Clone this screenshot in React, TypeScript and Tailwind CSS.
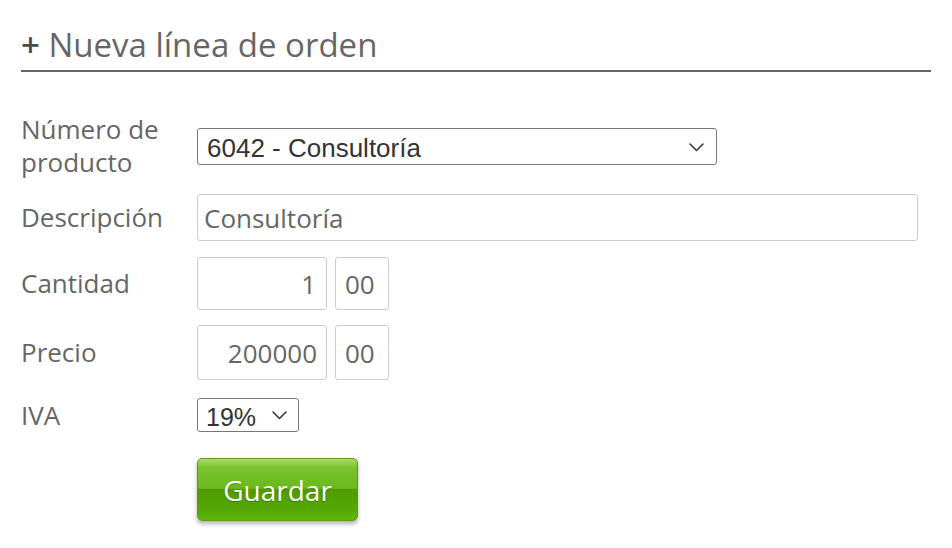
import React from 'react';

const labelCls = 'w-[176px] shrink-0 text-[26px] leading-[33px] text-[#666]';
const inputCls =
  'rounded-[3px] border border-[#ccc] bg-white px-[6px] text-[26px] text-[#666] outline-none font-["Open_Sans",sans-serif]';

function Chevron({ className }: { className?: string }) {
  return (
    <svg
      className={className}
      width="15"
      height="9"
      viewBox="0 0 15 9"
      fill="none"
      stroke="#333"
      strokeWidth="1.5"
      strokeLinecap="round"
      strokeLinejoin="round"
    >
      <path d="M1 1l6.5 6.5L14 1" />
    </svg>
  );
}

export default function App() {
  return (
    <div className="min-h-[548px] w-[952px] bg-white px-[21px] pt-[26px] font-['Open_Sans',sans-serif]">
      {/* Title */}
      <h2 className="border-b-2 border-[#666] pb-[6px] text-[33px] leading-[38px] text-[#666]">
        <span className="font-semibold leading-none text-[#4a4a4a]">+</span> Nueva línea de orden
      </h2>

      <form className="mt-[41px] flex flex-col" onSubmit={(e) => e.preventDefault()}>
        {/* Product */}
        <div className="flex items-center">
          <label className={labelCls}>
            Número de
            <br />
            producto
          </label>
          <div className="relative">
            <select
              defaultValue="6042"
              className="h-[37px] w-[520px] appearance-none rounded-[3px] border border-[#767676] bg-white pl-[9px] text-[26px] text-[#333] outline-none font-['Liberation_Sans',Arial,sans-serif]"
            >
              <option value="6042">6042 - Consultoría</option>
            </select>
            <Chevron className="pointer-events-none absolute right-[13px] top-[15px]" />
          </div>
        </div>

        {/* Description */}
        <div className="mt-[15px] flex items-center">
          <label className={labelCls}>Descripción</label>
          <input className={`${inputCls} h-[47px] w-[721px]`} defaultValue="Consultoría" />
        </div>

        {/* Quantity */}
        <div className="mt-[16px] flex items-center">
          <label className={labelCls}>Cantidad</label>
          <div className="flex gap-[8px]">
            <input className={`${inputCls} h-[53px] w-[130px] pr-[10px] text-right`} defaultValue="1" />
            <input className={`${inputCls} h-[53px] w-[54px] px-[9px]`} defaultValue="00" />
          </div>
        </div>

        {/* Price */}
        <div className="mt-[15px] flex items-center">
          <label className={labelCls}>Precio</label>
          <div className="flex gap-[8px]">
            <input className={`${inputCls} h-[55px] w-[130px] pr-[9px] text-right`} defaultValue="200000" />
            <input className={`${inputCls} h-[55px] w-[54px] px-[9px]`} defaultValue="00" />
          </div>
        </div>

        {/* VAT */}
        <div className="mt-[18px] flex items-center">
          <label className={labelCls}>IVA</label>
          <div className="relative">
            <select
              defaultValue="19"
              className="h-[34px] w-[102px] appearance-none rounded-[3px] border border-[#767676] bg-white pl-[8px] text-[25px] text-[#333] outline-none font-['Liberation_Sans',Arial,sans-serif]"
            >
              <option value="19">19%</option>
            </select>
            <Chevron className="pointer-events-none absolute right-[12px] top-[13px]" />
          </div>
        </div>

        {/* Save */}
        <div className="mt-[26px] flex">
          <div className="w-[176px] shrink-0" />
          <button
            type="submit"
            className="h-[63px] w-[161px] rounded-[5px] border border-[#5e9a13] bg-[linear-gradient(to_bottom,#a9dc6a_0%,#78c42e_14%,#69b81c_48%,#4f9a00_50%,#55a704_80%,#5fb50c_100%)] text-[28px] text-white shadow-[0_3px_4px_rgba(0,0,0,0.3)] [text-shadow:0_1px_1px_rgba(0,0,0,0.25)]"
          >
            Guardar
          </button>
        </div>
      </form>
    </div>
  );
}
